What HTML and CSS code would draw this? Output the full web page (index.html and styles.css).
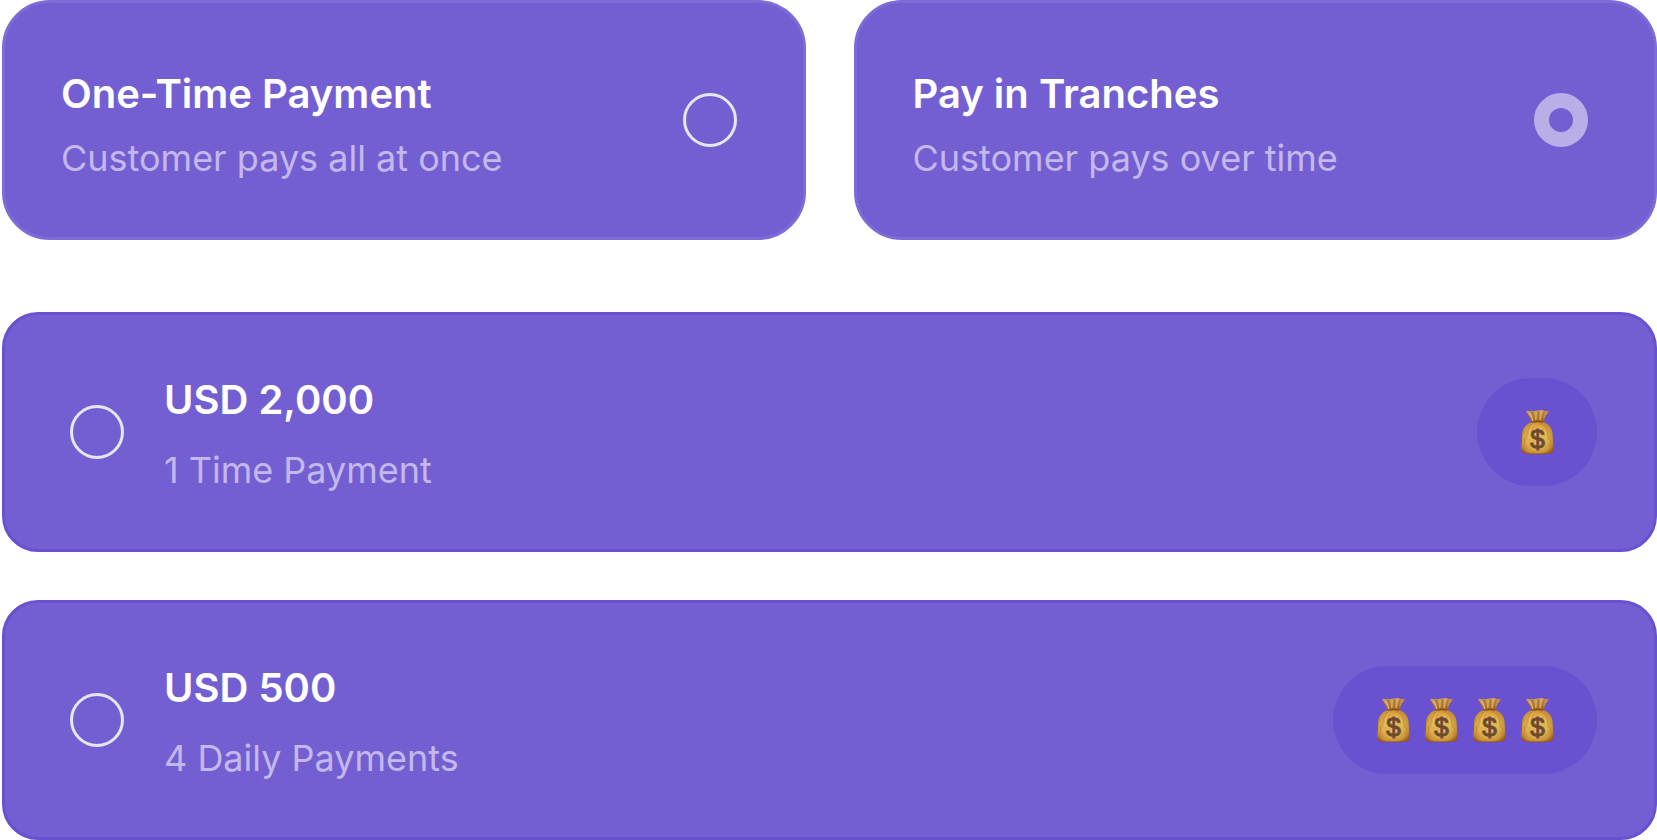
FILE: index.html
```html
<!DOCTYPE html>
<html lang="en">
  <head>
    <meta charset="utf-8">
    <meta name="viewport" content="width=device-width, initial-scale=1">
    <title>Payment Options</title>
    <link rel="stylesheet" href="styles.css">
  </head>
  <body>
    <!-- shared money bag icon -->
    <svg class="defs" width="0" height="0" aria-hidden="true">
      <defs>
        <radialGradient id="bagFill" cx="0.48" cy="0.5" r="0.6">
          <stop offset="0" stop-color="#e6bd62"/>
          <stop offset="0.55" stop-color="#dcae4b"/>
          <stop offset="0.82" stop-color="#c68f33"/>
          <stop offset="1" stop-color="#95601c"/>
        </radialGradient>
        <linearGradient id="neckFill" x1="0" y1="0" x2="0" y2="1">
          <stop offset="0" stop-color="#cb9a5c"/>
          <stop offset="0.5" stop-color="#c08a34"/>
          <stop offset="1" stop-color="#9a5a18"/>
        </linearGradient>
        <symbol id="bag" viewBox="0 0 48 48">
          <path fill="url(#neckFill)" d="M13 3.4 Q15 2.4 17.500 3.200 Q21 3.300 24.500 2.400 Q28 1.600 30.500 2.300 L31.500 3.100 Q34 2.800 36 3.400 Q32 7.500 30.500 14.500 H18.500 Q17 8 13 3.400Z"/>
          <path fill="none" stroke="#d8b07a" stroke-width="1.400" d="M16 4.500 Q19 8.500 20 13 M23 4 L22.800 12 M28.500 3 L27 12"/>
          <path fill="none" stroke="#a3691f" stroke-width="1" d="M19 4 Q21 8 21.300 13 M25.300 3.500 L25 13 M31.300 4 Q29 8 28.700 13"/>
          <path fill="url(#bagFill)" d="M19 14 Q24.500 12.600 30 14 C36 16 39 20 39.500 25 C40 31 39.500 36 41 39.500 C41.700 43 38 45.600 34 45.800 Q24.500 46.400 15 45.800 C10.500 45.600 7.300 43 8 39.500 C9.500 36 8.700 31 9.300 25 C9.800 20 13 16 19 14Z"/>
          <path fill="none" stroke="#b87b22" stroke-width="0.9" opacity="0.6" d="M20 15 Q14 20 13 31 M23 15 Q19 18 18.500 24 M29 15 Q35 20 35.500 32 M27 15 Q31 18 31.500 23 M11.500 30 Q12 36 11 41 M37.500 31 Q37.200 37 38.300 41"/>
          <path fill="none" stroke="#edc66b" stroke-width="1.100" opacity="0.6" d="M21 16 Q16.500 21 15.500 31 M28.500 17 Q33 22 33.300 31"/>
          <path fill="none" stroke="#8d4b0c" stroke-width="1.300" d="M18.500 14.200 Q24.500 12.800 30.500 14.200"/>
          <path fill="none" stroke="#91530f" stroke-width="1.200" opacity="0.6" d="M9 42.500 Q10.500 45 15 45.300 Q24.500 46 34 45.300 Q38.500 45 40 42.500"/>
          <text class="bag-sign" x="24.500" y="40" text-anchor="middle">$</text>
        </symbol>
      </defs>
    </svg>

    <form class="payment">
      <div class="types">
        <label class="card type">
          <span class="text">
            <span class="title">One-Time Payment</span>
            <span class="sub">Customer pays all at once</span>
          </span>
          <input type="radio" class="radio" name="type" value="once">
        </label>
        <label class="card type">
          <span class="text">
            <span class="title">Pay in Tranches</span>
            <span class="sub">Customer pays over time</span>
          </span>
          <input type="radio" class="radio" name="type" value="tranches" checked>
        </label>
      </div>

      <div class="plans">
        <label class="card plan">
          <input type="radio" class="radio" name="plan" value="1">
          <span class="text">
            <span class="title">USD 2,000</span>
            <span class="sub">1 Time Payment</span>
          </span>
          <span class="pill">
            <svg class="bag"><use href="#bag"/></svg>
          </span>
        </label>
        <label class="card plan">
          <input type="radio" class="radio" name="plan" value="4">
          <span class="text">
            <span class="title">USD 500</span>
            <span class="sub">4 Daily Payments</span>
          </span>
          <span class="pill">
            <svg class="bag"><use href="#bag"/></svg>
            <svg class="bag"><use href="#bag"/></svg>
            <svg class="bag"><use href="#bag"/></svg>
            <svg class="bag"><use href="#bag"/></svg>
          </span>
        </label>
      </div>
    </form>
  </body>
</html>
```

FILE: styles.css
```css
* {
    box-sizing: border-box;
}

body {
    margin: 0;
    background-color: #ffffff;
    font-family: Inter, "Liberation Sans", sans-serif;
}

.defs {
    display: block;
}

.payment {
    display: flex;
    flex-direction: column;
    gap: 72px;
    padding-left: 2px;
}

.types {
    display: grid;
    grid-template-columns: 1fr 1fr;
    gap: 48px;
}

.plans {
    display: flex;
    flex-direction: column;
    gap: 48px;
}

.card {
    display: flex;
    align-items: center;
    min-height: 240px;
    background-color: #745fd2;
    border: 3px solid #7f6bd7;
    cursor: pointer;
}

.type {
    justify-content: space-between;
    padding: 0 66px 0 56px;
    border-radius: 48px;
}

.plan {
    gap: 40px;
    padding: 0 57px 0 65px;
    border-color: #6951cf;
    border-radius: 36px;
}

.text {
    display: flex;
    flex-direction: column;
    gap: 4px;
    padding-top: 12px;
}

.plan .text {
    gap: 10px;
    padding-top: 6px;
}

.title {
    color: #ffffff;
    font-size: 40px;
    font-weight: 600;
    line-height: 60px;
}

.sub {
    color: #c3b8eb;
    font-size: 36px;
    line-height: 60px;
}

.radio {
    appearance: none;
    flex: none;
    width: 54px;
    height: 54px;
    margin: 0;
    border: 3px solid #e5e7eb;
    border-radius: 50%;
    cursor: pointer;
}

.radio:checked {
    border: 15px solid #baaee8;
}

.pill {
    display: flex;
    align-items: center;
    height: 108px;
    margin-left: auto;
    padding: 0 36px;
    border-radius: 54px;
    background-color: #6951cf;
}

.bag {
    width: 48px;
    height: 48px;
}

.bag-sign {
    fill: #6b4a30;
    stroke: #6b4a30;
    stroke-width: 1px;
    font-family: "Liberation Sans", sans-serif;
    font-size: 26px;
}
```
